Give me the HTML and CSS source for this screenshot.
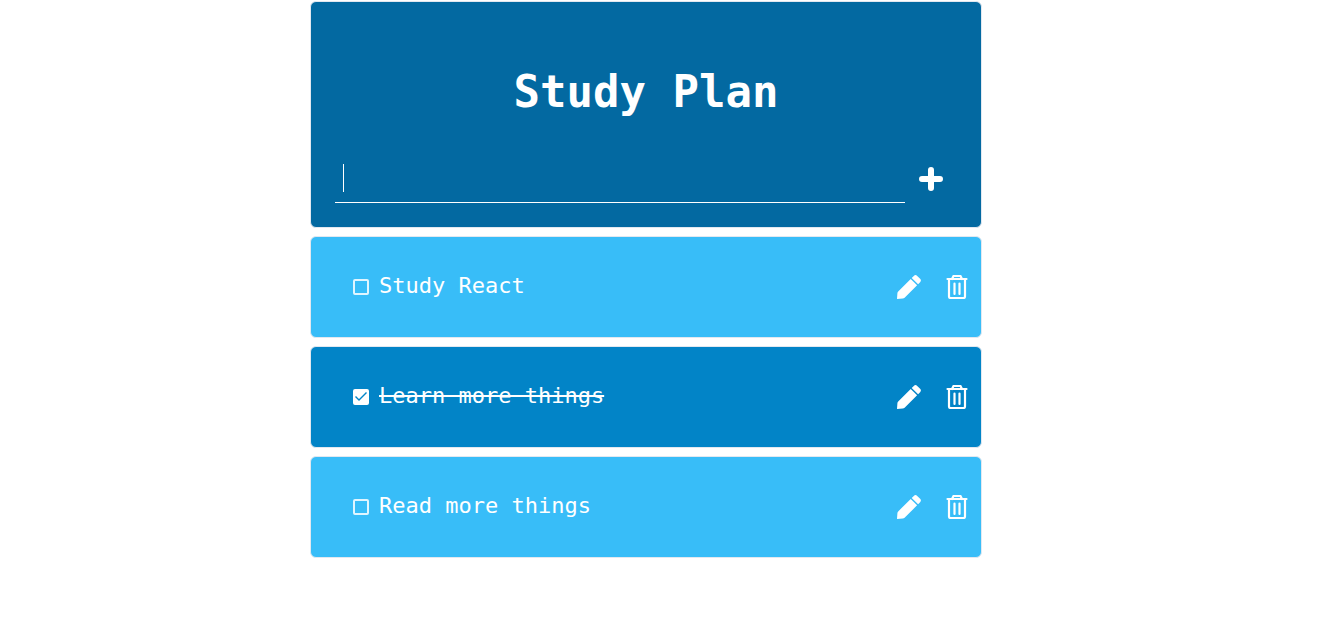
FILE: index.html
```html
<!DOCTYPE html>
<html lang="en">
<head>
<meta charset="utf-8">
<meta name="viewport" content="width=device-width, initial-scale=1">
<title>Study Plan</title>
<link rel="stylesheet" href="styles.css">
</head>
<body>
<svg class="sprite" aria-hidden="true">
  <symbol id="pencil" viewBox="0 0 24 24">
    <path d="M13.700 3.900 20.100 10.300 7.600 22.800Q6.800 23.500 5.800 23.600L0 24 .4 18.200Q.5 17.200 1.200 16.400ZM14.700 2.900 16.800.9Q18.500-.7 20.200.9L23.100 3.800Q24.700 5.500 23.100 7.200L21.100 9.300Z"/>
  </symbol>
  <symbol id="trash" viewBox="0 0 24 24">
    <path d="M2.500 4H21.500M4 4V21.500Q4 23 5.500 23H18.500Q20 23 20 21.500V4M7 4 8.500 1H15.500L17 4M9.500 8.500V19M14.500 8.500V19" fill="none" stroke="currentColor" stroke-width="2.200" stroke-linecap="round" stroke-linejoin="round"/>
  </symbol>
</svg>
<main class="planner">
  <header class="card header">
    <h1 class="title">Study Plan</h1>
    <form class="entry">
      <div class="field"><input class="field-input" type="text" aria-label="New task"></div>
      <button class="icon-button add" type="button" aria-label="Add task">
        <svg class="icon" viewBox="0 0 24 24"><path d="M12 3V21M3 12H21" stroke="currentColor" stroke-width="6" stroke-linecap="round"/></svg>
      </button>
    </form>
  </header>
  <ul class="tasks">
    <li class="card task">
      <label class="task-label"><input class="check" type="checkbox"><span class="task-text">Study React</span></label>
      <div class="actions">
        <button class="icon-button" type="button" aria-label="Edit Study React"><svg class="icon"><use href="#pencil"/></svg></button>
        <button class="icon-button" type="button" aria-label="Delete Study React"><svg class="icon"><use href="#trash"/></svg></button>
      </div>
    </li>
    <li class="card task done">
      <label class="task-label"><input class="check" type="checkbox" checked><span class="task-text">Learn more things</span></label>
      <div class="actions">
        <button class="icon-button" type="button" aria-label="Edit Learn more things"><svg class="icon"><use href="#pencil"/></svg></button>
        <button class="icon-button" type="button" aria-label="Delete Learn more things"><svg class="icon"><use href="#trash"/></svg></button>
      </div>
    </li>
    <li class="card task">
      <label class="task-label"><input class="check" type="checkbox"><span class="task-text">Read more things</span></label>
      <div class="actions">
        <button class="icon-button" type="button" aria-label="Edit Read more things"><svg class="icon"><use href="#pencil"/></svg></button>
        <button class="icon-button" type="button" aria-label="Delete Read more things"><svg class="icon"><use href="#trash"/></svg></button>
      </div>
    </li>
  </ul>
</main>
</body>
</html>
```
FILE: styles.css
```css
* {
  box-sizing: border-box;
}

body {
  margin: 0;
  padding: 1px 25px 0 0;
  background: #fff;
  color: #fff;
  font: 22px/32px Consolas, "DejaVu Sans Mono", monospace;
}

.sprite {
  display: none;
}

.planner,
.tasks {
  display: flex;
  flex-direction: column;
  gap: 8px;
}

.planner {
  max-width: 672px;
  margin: 0 auto;
}

.tasks {
  margin: 0;
  padding: 0;
  list-style: none;
}

.card {
  border: 1px solid #e2e8f0;
  border-radius: 6px;
  background: #38bdf8;
}

.header {
  padding: 66px 24px 24px;
  background: #0369a1;
}

.title {
  margin: 0 0 38px;
  font-size: 44px;
  line-height: 48px;
  text-align: center;
}

.entry {
  display: flex;
}

.field {
  position: relative;
  flex: 1;
}

/* text cursor */
.field::before {
  content: "";
  position: absolute;
  top: 10px;
  left: 8px;
  width: 1px;
  height: 28px;
  background: #fff;
}

.field-input {
  display: block;
  width: 100%;
  height: 49px;
  padding: 0 8px;
  border: 0;
  border-bottom: 1px solid #fff;
  outline: 0;
  background: transparent;
  color: inherit;
  font: inherit;
}

.icon-button {
  display: flex;
  padding: 12px;
  border: 0;
  background: transparent;
  color: inherit;
  cursor: pointer;
}

.add {
  padding: 13px 14px 12px;
}

.icon {
  display: block;
  width: 24px;
  height: 24px;
  fill: currentColor;
}

.task {
  display: flex;
  align-items: center;
  justify-content: space-between;
  min-height: 102px;
  padding-left: 42px;
}

.done {
  background: #0284c7;
}

.task-label {
  display: flex;
  align-items: center;
  gap: 10px;
}

.actions {
  display: flex;
}

.check {
  appearance: none;
  display: grid;
  width: 16px;
  height: 16px;
  margin: 0;
  border: 2px solid #e0f5ff;
  border-radius: 2px;
}

.check:checked {
  border-color: #fff;
  background: #fff;
}

.check:checked::before {
  content: "";
  width: 12px;
  height: 12px;
  background: #0284c7;
  clip-path: polygon(0 6px, 1px 5px, 4px 8px, 11px 1px, 12px 2px, 4px 10px);
}

.task-text {
  padding-bottom: 2px;
}

.done .task-text {
  text-decoration: line-through;
}
```
